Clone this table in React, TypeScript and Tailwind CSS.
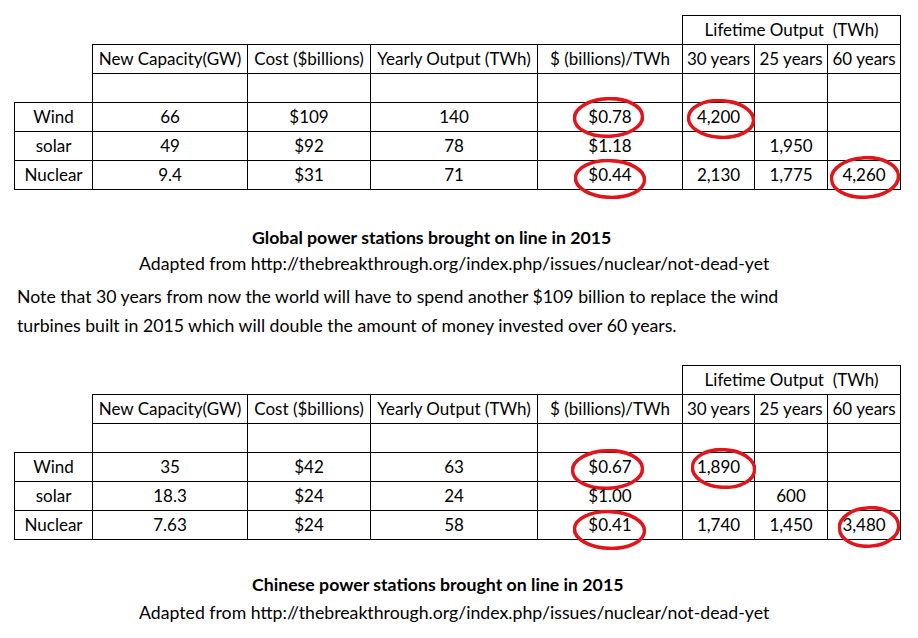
type Mark = { cls: string; rot: string };

type Row = { label: string; cells: string[]; marks: (Mark | null)[] };

const headers = [
  "New Capacity(GW)",
  "Cost ($billions)",
  "Yearly Output (TWh)",
  "$ (billions)/TWh",
  "30 years",
  "25 years",
  "60 years",
];

const globalRows: Row[] = [
  {
    label: "Wind",
    cells: ["66", "$109", "140", "$0.78", "4,200", "", ""],
    marks: [
      null,
      null,
      null,
      { cls: "left-[35px] top-[-6px] w-[71px] h-[41px]", rot: "-rotate-2" },
      { cls: "left-[4px] top-[-4px] w-[68px] h-[40px]", rot: "rotate-3" },
      null,
      null,
    ],
  },
  { label: "solar", cells: ["49", "$92", "78", "$1.18", "", "1,950", ""], marks: [] },
  {
    label: "Nuclear",
    cells: ["9.4", "$31", "71", "$0.44", "2,130", "1,775", "4,260"],
    marks: [
      null,
      null,
      null,
      { cls: "left-[36px] top-[-2px] w-[72px] h-[40px]", rot: "rotate-2" },
      null,
      null,
      { cls: "left-[2px] top-[-5px] w-[70px] h-[43px]", rot: "-rotate-3" },
    ],
  },
];

const chinaRows: Row[] = [
  {
    label: "Wind",
    cells: ["35", "$42", "63", "$0.67", "1,890", "", ""],
    marks: [
      null,
      null,
      null,
      { cls: "left-[33px] top-[-4px] w-[73px] h-[41px]", rot: "-rotate-2" },
      { cls: "left-[8px] top-[-5px] w-[65px] h-[41px]", rot: "rotate-3" },
      null,
      null,
    ],
  },
  { label: "solar", cells: ["18.3", "$24", "24", "$1.00", "", "600", ""], marks: [] },
  {
    label: "Nuclear",
    cells: ["7.63", "$24", "58", "$0.41", "1,740", "1,450", "3,480"],
    marks: [
      null,
      null,
      null,
      { cls: "left-[35px] top-[-1px] w-[73px] h-[40px]", rot: "rotate-2" },
      null,
      null,
      { cls: "left-[10px] top-[-5px] w-[62px] h-[42px]", rot: "-rotate-3" },
    ],
  },
];

function Ring({ mark }: { mark: Mark }) {
  return (
    <svg
      className={`pointer-events-none absolute ${mark.cls} ${mark.rot}`}
      viewBox="0 0 100 100"
      preserveAspectRatio="none"
    >
      <ellipse
        cx="50"
        cy="50"
        rx="48"
        ry="46"
        fill="none"
        stroke="#e0161d"
        strokeWidth="3.6"
        vectorEffect="non-scaling-stroke"
      />
    </svg>
  );
}

const cell = "border border-black text-center p-0 h-[29px] leading-[28px] whitespace-nowrap";

function DataTable({ rows }: { rows: Row[] }) {
  return (
    <table className="ml-[14px] w-[886px] table-fixed border-collapse">
      <colgroup>
        <col className="w-[78px]" />
        <col className="w-[155px]" />
        <col className="w-[123px]" />
        <col className="w-[167px]" />
        <col className="w-[145px]" />
        <col className="w-[72px]" />
        <col className="w-[73px]" />
        <col className="w-[73px]" />
      </colgroup>
      <tbody>
        <tr className="h-[28px]">
          <td colSpan={5} className="p-0" />
          <td colSpan={3} className={`${cell} whitespace-pre`}>
            Lifetime Output  (TWh)
          </td>
        </tr>
        <tr>
          <td className="p-0" />
          {headers.map((h) => (
            <td key={h} className={cell}>
              {h}
            </td>
          ))}
        </tr>
        <tr>
          <td className="p-0 h-[29px]" />
          {headers.map((h) => (
            <td key={h} className={cell} />
          ))}
        </tr>
        {rows.map((r) => (
          <tr key={r.label}>
            <td className={cell}>{r.label}</td>
            {r.cells.map((c, i) => (
              <td key={i} className={cell}>
                <div className="relative h-[28px]">
                  {c}
                  {r.marks[i] && <Ring mark={r.marks[i]!} />}
                </div>
              </td>
            ))}
          </tr>
        ))}
      </tbody>
    </table>
  );
}

export default function App() {
  return (
    <div className="w-[918px] h-[638px] overflow-hidden bg-white pt-[15px] text-black text-[17px] font-['Lato',sans-serif]">
      <DataTable rows={globalRows} />

      <div className="text-[17.7px]">
        <div className="mt-[34px] h-[28px] leading-[28px] pl-[252px] font-bold">
          Global power stations brought on line in 2015
        </div>
        <div className="h-[24px] leading-[24px] pl-[139px]">
          Adapted from http://thebreakthrough.org/index.php/issues/nuclear/not-dead-yet
        </div>
        <div className="mt-[9px] h-[24px] leading-[24px] pl-[17px]">
          Note that 30 years from now the world will have to spend another $109 billion to replace the wind
        </div>
        <div className="mt-[5px] h-[24px] leading-[24px] pl-[17px]">
          turbines built in 2015 which will double the amount of money invested over 60 years.
        </div>
      </div>

      <div className="mt-[27px]">
        <DataTable rows={chinaRows} />
      </div>

      <div className="text-[17.7px]">
        <div className="mt-[31px] h-[28px] leading-[28px] pl-[252px] font-bold">
          Chinese power stations brought on line in 2015
        </div>
        <div className="mt-[2px] h-[24px] leading-[24px] pl-[139px]">
          Adapted from http://thebreakthrough.org/index.php/issues/nuclear/not-dead-yet
        </div>
      </div>
    </div>
  );
}
